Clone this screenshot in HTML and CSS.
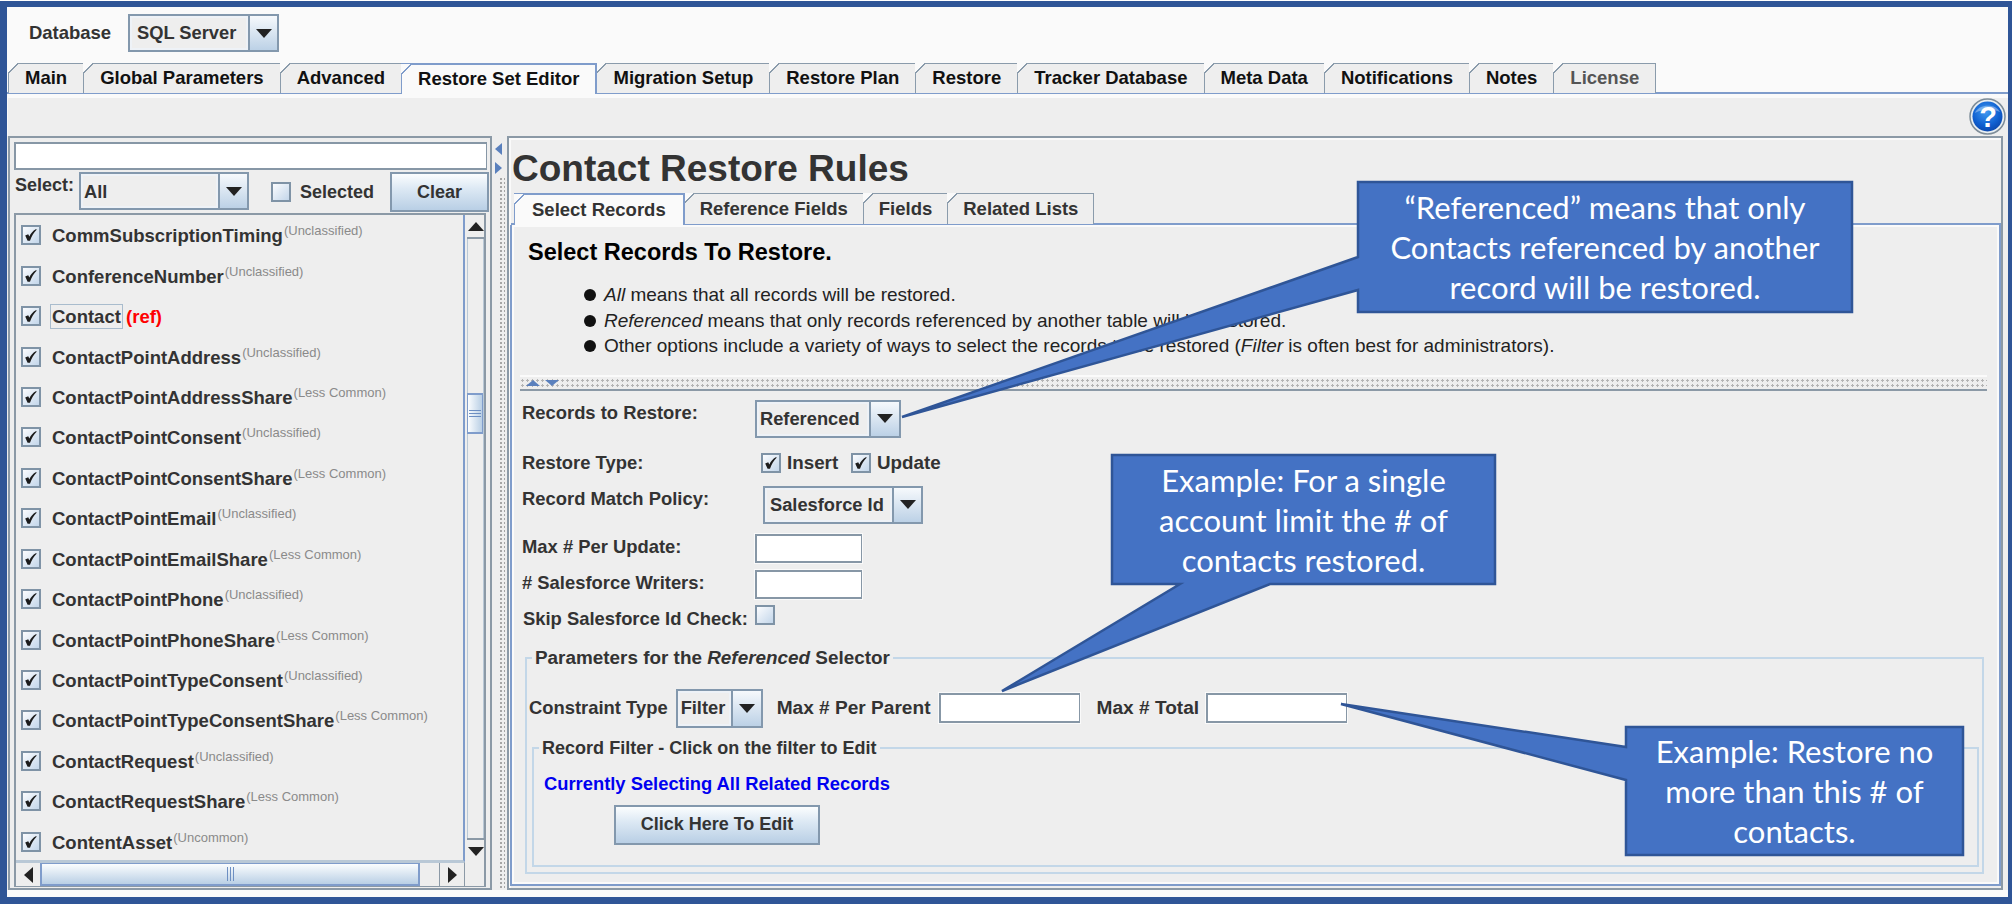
FILE: index.html
```html
<!DOCTYPE html>
<html lang="en">
<head>
<meta charset="utf-8">
<title>Contact Restore Rules</title>
<link rel="stylesheet" href="styles.css">
</head>
<body>
<svg class="defs" width="0" height="0" aria-hidden="true">
  <symbol id="tick" viewBox="0 0 16 16"><path d="M2.2 8.6 L5.2 7.2 L6.4 9.4 C7.6 6.6 9.6 4 13.2 2 L13.6 2.8 C10.8 5.6 8.6 9 7 13.8 L4.6 13.8 Z" fill="#1c1c1c"/></symbol>
</svg>
<div class="frame">
  <div class="topbar">
    <span class="db-label">Database</span>
    <div class="combo combo-db"><span class="combo-text">SQL Server</span><span class="combo-btn"><i class="tri"></i></span></div>
  </div>
  <div class="tabs">
    <div class="tab">Main</div>
    <div class="tab">Global Parameters</div>
    <div class="tab">Advanced</div>
    <div class="tab active">Restore Set Editor</div>
    <div class="tab">Migration Setup</div>
    <div class="tab">Restore Plan</div>
    <div class="tab">Restore</div>
    <div class="tab">Tracker Database</div>
    <div class="tab">Meta Data</div>
    <div class="tab">Notifications</div>
    <div class="tab">Notes</div>
    <div class="tab disabled">License</div>
  </div>
  <div class="toolbar">
    <svg class="help" viewBox="0 0 37 37" width="37" height="37">
      <defs>
        <radialGradient id="helpfill" cx="0.45" cy="0.35" r="0.75"><stop offset="0" stop-color="#3f9bf0"/><stop offset="0.6" stop-color="#0f5fd0"/><stop offset="1" stop-color="#0a3f9f"/></radialGradient>
      </defs>
      <circle cx="18.5" cy="18.5" r="17.5" fill="#e8eef2" stroke="#7d8c98" stroke-width="1.5"/>
      <circle cx="18.5" cy="18.5" r="15" fill="url(#helpfill)"/>
      <path d="M6 15 C9 6 27 5 31 14 C24 11 13 11 6 15 Z" fill="#ffffff" opacity="0.35"/>
      <text x="19" y="29" class="help-q">?</text>
    </svg>
  </div>
  <div class="split">
    <section class="left">
      <input class="search" type="text" aria-label="Search">
      <div class="select-row">
        <span class="select-label">Select:</span>
        <div class="combo combo-all"><span class="combo-text">All</span><span class="combo-btn"><i class="tri"></i></span></div>
        <label class="selected"><span class="check"></span>Selected</label>
        <button class="btn btn-clear">Clear</button>
      </div>
      <div class="listbox">
        <div class="list">
          <div class="row"><span class="check"><svg><use href="#tick"/></svg></span><span class="name">CommSubscriptionTiming<sup>(Unclassified)</sup></span></div>
          <div class="row"><span class="check"><svg><use href="#tick"/></svg></span><span class="name">ConferenceNumber<sup>(Unclassified)</sup></span></div>
          <div class="row"><span class="check"><svg><use href="#tick"/></svg></span><span class="name"><span class="focus">Contact</span> <span class="ref">(ref)</span></span></div>
          <div class="row"><span class="check"><svg><use href="#tick"/></svg></span><span class="name">ContactPointAddress<sup>(Unclassified)</sup></span></div>
          <div class="row"><span class="check"><svg><use href="#tick"/></svg></span><span class="name">ContactPointAddressShare<sup>(Less Common)</sup></span></div>
          <div class="row"><span class="check"><svg><use href="#tick"/></svg></span><span class="name">ContactPointConsent<sup>(Unclassified)</sup></span></div>
          <div class="row"><span class="check"><svg><use href="#tick"/></svg></span><span class="name">ContactPointConsentShare<sup>(Less Common)</sup></span></div>
          <div class="row"><span class="check"><svg><use href="#tick"/></svg></span><span class="name">ContactPointEmail<sup>(Unclassified)</sup></span></div>
          <div class="row"><span class="check"><svg><use href="#tick"/></svg></span><span class="name">ContactPointEmailShare<sup>(Less Common)</sup></span></div>
          <div class="row"><span class="check"><svg><use href="#tick"/></svg></span><span class="name">ContactPointPhone<sup>(Unclassified)</sup></span></div>
          <div class="row"><span class="check"><svg><use href="#tick"/></svg></span><span class="name">ContactPointPhoneShare<sup>(Less Common)</sup></span></div>
          <div class="row"><span class="check"><svg><use href="#tick"/></svg></span><span class="name">ContactPointTypeConsent<sup>(Unclassified)</sup></span></div>
          <div class="row"><span class="check"><svg><use href="#tick"/></svg></span><span class="name">ContactPointTypeConsentShare<sup>(Less Common)</sup></span></div>
          <div class="row"><span class="check"><svg><use href="#tick"/></svg></span><span class="name">ContactRequest<sup>(Unclassified)</sup></span></div>
          <div class="row"><span class="check"><svg><use href="#tick"/></svg></span><span class="name">ContactRequestShare<sup>(Less Common)</sup></span></div>
          <div class="row"><span class="check"><svg><use href="#tick"/></svg></span><span class="name">ContentAsset<sup>(Uncommon)</sup></span></div>
        </div>
        <div class="vbar">
          <span class="sb-btn sb-v"><i class="tri tri-up"></i></span>
          <div class="vtrack"><div class="vthumb"><i></i><i></i><i></i></div></div>
          <span class="sb-btn sb-v"><i class="tri"></i></span>
        </div>
        <div class="hbar">
          <span class="sb-btn sb-h"><i class="tri-left"></i></span>
          <div class="hthumb"><i></i><i></i><i></i></div>
          <div class="htrack"></div>
          <span class="sb-btn sb-h"><i class="tri-right"></i></span>
        </div>
        <div class="corner"></div>
      </div>
    </section>
    <div class="splitter">
      <i class="arrow-l"></i>
      <i class="arrow-r"></i>
      <div class="dots"></div>
    </div>
    <section class="right">
      <h1 class="title">Contact Restore Rules</h1>
      <div class="subtabs">
        <div class="tab sub active">Select Records</div>
        <div class="tab sub">Reference Fields</div>
        <div class="tab sub">Fields</div>
        <div class="tab sub">Related Lists</div>
      </div>
      <div class="panel">
        <h2 class="heading">Select Records To Restore.</h2>
        <ul class="bullets">
          <li><em>All</em> means that all records will be restored.</li>
          <li><em>Referenced</em> means that only records referenced by another table will be restored.</li>
          <li>Other options include a variety of ways to select the records to be restored (<em>Filter</em> is often best for administrators).</li>
        </ul>
        <div class="divider"><i class="mini-up"></i><i class="mini-down"></i></div>
        <div class="form">
          <div class="frow f1"><span class="flabel up12">Records to Restore:</span><div class="combo combo-ref"><span class="combo-text">Referenced</span><span class="combo-btn"><i class="tri"></i></span></div></div>
          <div class="frow f2"><span class="flabel">Restore Type:</span><div class="checks"><span class="check"><svg><use href="#tick"/></svg></span><span class="clabel">Insert</span><span class="check"><svg><use href="#tick"/></svg></span><span class="clabel">Update</span></div></div>
          <div class="frow f3"><span class="flabel up12 w241">Record Match Policy:</span><div class="combo combo-sf"><span class="combo-text">Salesforce Id</span><span class="combo-btn"><i class="tri"></i></span></div></div>
          <div class="frow f4"><span class="flabel up3">Max # Per Update:</span><input class="field field-s" type="text" aria-label="Max per update"></div>
          <div class="frow f5"><span class="flabel up3"># Salesforce Writers:</span><input class="field field-s" type="text" aria-label="Salesforce writers"></div>
          <div class="frow f6"><span class="flabel skip">Skip Salesforce Id Check:</span><span class="check"></span></div>
        </div>
        <fieldset class="group outer">
          <legend>Parameters for the <em>Referenced</em> Selector</legend>
          <div class="crow">
            <span class="clbl">Constraint Type</span>
            <div class="combo combo-filter"><span class="combo-text">Filter</span><span class="combo-btn"><i class="tri"></i></span></div>
            <span class="clbl c-parent">Max # Per Parent</span>
            <input class="field field-l" type="text" aria-label="Max per parent">
            <span class="clbl c-total">Max # Total</span>
            <input class="field field-l" type="text" aria-label="Max total">
          </div>
          <fieldset class="group inner">
            <legend>Record Filter - Click on the filter to Edit</legend>
            <div class="status">Currently Selecting All Related Records</div>
            <button class="btn btn-edit">Click Here To Edit</button>
          </fieldset>
        </fieldset>
      </div>
    </section>
  </div>
</div>
<svg class="pointers" width="2014" height="905" viewBox="0 0 2014 905" aria-hidden="true">
  <path d="M1358 182 H1852 V312 H1358 V290 L902 417 L1358 257 Z"/>
  <path d="M1112 455 H1495 V584 H1270 L1002 691 L1180 584 H1112 Z"/>
  <path d="M1626 727 H1963 V855 H1626 V780 L1341 704 L1626 747 Z"/>
</svg>
<div class="callout call-a">“Referenced” means that only<br>Contacts referenced by another<br>record will be restored.</div>
<div class="callout call-b">Example: For a single<br>account limit the # of<br>contacts restored.</div>
<div class="callout call-c">Example: Restore no<br>more than this # of<br>contacts.</div>
</body>
</html>
```
FILE: styles.css
```css
* { box-sizing: border-box; }
html, body { margin: 0; padding: 0; }
body { width: 2014px; height: 905px; overflow: hidden; background: #fff; font-family: "Liberation Sans", Arial, sans-serif; color: #333; position: relative; }
.defs { position: absolute; }
.frame { margin: 1px 2px 0 0; height: 903px; border: solid #2f5597; border-width: 6px 4px 7px 7px; background: #fafafa; display: flex; flex-direction: column; }

.topbar { height: 56px; flex: none; display: flex; align-items: flex-start; padding: 7px 0 0 22px; }
.db-label { font-size: 18.5px; font-weight: bold; line-height: 38px; width: 99px; letter-spacing: -.05px; }

.combo { display: flex; border: 2px solid #8398ad; background: #eee; font-size: 18.3px; font-weight: bold; color: #333; flex: none; }
.combo-text { flex: 1; display: flex; align-items: center; padding-left: 5px; border: 2px solid #eef2f7; white-space: nowrap; }
.combo-btn { flex: none; border-left: 2px solid #8398ad; background: linear-gradient(#f6f9fc, #bcd1e6); display: flex; align-items: center; justify-content: center; }
.tri { display: block; width: 0; height: 0; border: solid transparent; border-width: 9px 8px 0; border-top-color: #222; }
.tri-up { border-width: 0 8px 9px; border-bottom-color: #222; border-top-color: transparent; }
.tri-left { display: block; width: 0; height: 0; border: solid transparent; border-width: 8px 9px 8px 0; border-right-color: #222; }
.tri-right { display: block; width: 0; height: 0; border: solid transparent; border-width: 8px 0 8px 9px; border-left-color: #222; }
.combo-db { width: 151px; height: 38px; }
.combo-db .combo-btn { width: 29px; }
.combo-all { width: 170px; height: 38px; }
.combo-all .combo-btn { width: 29px; }
.combo-all .combo-text { padding: 2px 0 0 1px; }
.combo-ref { width: 146px; height: 38px; }
.combo-ref .combo-btn { width: 30px; }
.combo-ref .combo-text { padding-left: 1px; }
.combo-sf { width: 160px; height: 38px; }
.combo-sf .combo-btn { width: 29px; }
.combo-sf .combo-text { padding-left: 3px; }
.combo-filter { width: 87px; height: 39px; }
.combo-filter .combo-btn { width: 30px; }
.combo-filter .combo-text { padding-left: 1px; }

.tabs { height: 31px; flex: none; display: flex; padding-left: 1px; border-bottom: 2px solid #7f9ccb; }
.tab { position: relative; height: 30px; padding: 0 16px; margin-right: -1px; border: 1px solid #8a9bab; border-bottom: 0; background: #eee; font-size: 18.5px; font-weight: bold; line-height: 28px; color: #111; white-space: nowrap; }
.tab::before { content: ""; position: absolute; left: -1px; top: -1px; width: 10px; height: 10px; background: linear-gradient(135deg, #fafafa 46%, #8a9bab 46%, #8a9bab 56%, transparent 56%); }
.tab.active { background: #fafafa; border-color: #7f9ccb; height: 31px; z-index: 1; border-width: 2px 2px 0 1px; }
.tab.active::before { background: linear-gradient(135deg, #fafafa 46%, #7f9ccb 46%, #7f9ccb 58%, transparent 58%); }
.tab.disabled { color: #555; }

.toolbar { height: 42px; flex: none; margin-left: 1px; border-top: 4px solid #fafafa; background: #eee; display: flex; justify-content: flex-end; padding-right: 2px; }
.help { display: block; flex: none; }
.help-q { font: bold 29px "Liberation Sans", Arial, sans-serif; fill: #fff; text-anchor: middle; }

.split { height: 754px; flex: none; display: flex; padding: 0 5px 0 1px; background: #eee; }

.left { width: 484px; flex: none; border: 2px solid #8b99a6; padding: 4px 1px 1px 4px; display: flex; flex-direction: column; }
.search { display: block; height: 28px; width: 473px; flex: none; margin: 0 0 2px; padding: 0; background: #fff; border: solid #8797a6; border-width: 2px 1px 2px 2px; outline: 0; }
.select-row { height: 40px; flex: none; display: flex; align-items: flex-start; margin-bottom: 1px; }
.select-label { font-size: 18px; font-weight: bold; width: 65px; padding-left: 1px; line-height: 26px; }
.selected { display: flex; align-items: center; height: 38px; margin-left: 22px; width: 119px; font-size: 18px; font-weight: bold; flex: none; padding-top: 2px; }
.selected .check { margin-right: 9px; }
.check { display: flex; flex: none; width: 20px; height: 20px; border: 2px solid #7f93a6; background: linear-gradient(135deg, #fbfcfe, #c3d6ea); align-items: center; justify-content: center; }
.check svg { display: block; width: 16px; height: 16px; }

.btn { display: block; font-family: inherit; font-weight: bold; font-size: 18px; color: #333; border: 2px solid #8398ad; background: linear-gradient(#fbfdfe, #dde9f4 40%, #b9cfe5); padding: 0; }
.btn-clear { width: 99px; height: 40px; flex: none; }

.listbox { flex: 1; width: 472px; display: grid; grid-template-columns: 449px 1fr; grid-template-rows: 1fr 24px; border: 2px solid #8b99a6; border-bottom-width: 1px; min-height: 0; }
.list { display: flex; flex-direction: column; overflow: hidden; min-height: 0; border-right: 2px solid #7f9ccb; border-bottom: 2px solid #b9c8d6; padding: 0 0 0 5px; }
.row { flex: 0 0 40.45px; display: flex; align-items: center; gap: 11px; }
.name { font-size: 18.5px; font-weight: bold; color: #333; white-space: nowrap; line-height: 22px; padding-top: 2px; }
.name sup { font-size: 13px; font-weight: normal; color: #8a8a8a; vertical-align: 7px; line-height: 0; margin-left: 1px; }
.ref { color: #f00; }
.focus { outline: 1px solid #a9bccd; outline-offset: 1px; }

.vbar { display: flex; flex-direction: column; margin-left: 2px; min-height: 0; }
.sb-btn { display: flex; align-items: center; justify-content: center; flex: none; background: #eee; }
.sb-v { height: 24px; border: solid #8b99a6; border-width: 0; }
.vbar .sb-v:first-child { border-bottom-width: 2px; }
.vbar .sb-v:last-child { border-top-width: 2px; }
.vtrack { flex: 1; padding-top: 154px; border-left: 1px solid #b9c8d6; border-right: 1px solid #b9c8d6; }
.vthumb { height: 41px; margin-left: -1px; background: linear-gradient(90deg, #fbfdfe, #b9cfe5); border: 2px solid #7f9ccb; border-width: 2px 1px; display: flex; flex-direction: column; justify-content: center; align-items: center; gap: 2px; }
.vthumb i { display: block; width: 12px; height: 1px; background: #6d8fc2; }

.hbar { display: flex; border-top: 1px solid #b9c8d6; border-right: 1px solid #8b99a6; }
.sb-h { width: 24px; }
.hthumb { width: 380px; background: linear-gradient(#fbfdfe, #b9cfe5); border: solid #7f9ccb; border-width: 1px 2px 2px; display: flex; justify-content: center; align-items: center; gap: 2px; flex: none; }
.hthumb i { display: block; width: 1px; height: 14px; background: #6d8fc2; }
.htrack { flex: 1; border-right: 1px solid #8b99a6; }
.hbar .sb-h:first-child { border-right: 0; }
.corner { background: #eee; }

.splitter { width: 15px; flex: none; padding: 7px 0 0 3px; display: flex; flex-direction: column; }
.arrow-l { display: block; width: 0; height: 0; border: solid transparent; border-width: 6px 7px 6px 0; border-right-color: #5a80bd; }
.arrow-r { display: block; width: 0; height: 0; margin-top: 7px; border: solid transparent; border-width: 6px 0 6px 7px; border-left-color: #5a80bd; }
.dots { flex: 1; width: 6px; margin: 3px 0 2px 4px; background: radial-gradient(circle, #a5a5a5 1px, transparent 1.2px) 0 0 / 4px 4px; }

.right { flex: 1; min-width: 0; border: 2px solid #8b99a6; display: flex; flex-direction: column; padding: 0 0 0 2px; box-shadow: inset 2px 2px 0 #fafafa; }
.title { margin: 0; padding: 9px 0 0 1px; height: 55px; font-size: 37px; line-height: 44px; font-weight: bold; color: #333; white-space: nowrap; flex: none; }
.subtabs { display: flex; padding-left: 3px; height: 32px; flex: none; border-bottom: 2px solid #7f9ccb; }
.tab.sub { height: 31px; padding: 0 15px; line-height: 30px; background: #eee; color: #333; }
.tab.sub.active { height: 32px; padding: 0 17px; background: #fafafa; }

.panel { flex: 1; min-height: 0; margin: 0 0 2px -1px; border: solid #7f9ccb; border-width: 0 2px 2px 2px; background: #eee; box-shadow: inset 0 0 0 2px #fafafa; padding: 0; }
.heading { margin: 0; padding: 13px 0 0 16px; height: 47px; font-size: 23.5px; line-height: 28px; font-weight: bold; color: #000; }
.bullets { list-style: none; margin: 10px 0 0; padding: 0 0 0 92px; font-size: 19px; line-height: 25.5px; color: #222; }
.bullets li { position: relative; white-space: nowrap; }
.bullets li::before { content: ""; position: absolute; left: -20px; top: 7px; width: 12px; height: 12px; border-radius: 50%; background: #111; }

.divider { height: 16px; margin: 16px 12px 0 8px; border-top: 2px solid #fafafa; border-bottom: 2px solid #8b99a6; background: radial-gradient(circle, #b4b4b4 1px, transparent 1.2px) 0 1px / 5px 5px; display: flex; align-items: center; padding-left: 6px; gap: 5px; }
.mini-up { display: block; width: 0; height: 0; border: solid transparent; border-width: 0 7px 6px; border-bottom-color: #5a80bd; }
.mini-down { display: block; width: 0; height: 0; border: solid transparent; border-width: 6px 7px 0; border-top-color: #5a80bd; }

.form { padding-left: 10px; }
.frow { display: flex; align-items: center; }
.flabel { width: 233px; flex: none; font-size: 18.4px; font-weight: bold; line-height: 22px; color: #333; white-space: nowrap; }
.up12 { padding-bottom: 12px; }
.up3 { padding-bottom: 3px; }
.w241 { width: 241px; }
.skip { align-self: flex-start; margin-top: 3px; padding-left: 1px; }
.f1 { margin-top: 9px; height: 38px; }
.f2 { margin-top: 15px; height: 20px; }
.f3 { margin-top: 13px; height: 38px; }
.f4 { margin-top: 10px; height: 29px; }
.f5 { margin-top: 7px; height: 29px; }
.f6 { margin-top: 6px; height: 24px; align-items: flex-start; }
.checks { display: flex; align-items: center; padding-left: 6px; }
.clabel { font-size: 18.8px; font-weight: bold; margin-left: 6px; width: 64px; }
.clabel:last-child { width: auto; }
.field { display: block; flex: none; margin: 0; padding: 0; height: 29px; background: #fff; border: solid #8797a6; border-width: 2px 1px 2px 2px; outline: 1px solid #fafafa; }
.field-s { width: 107px; }
.field-l { width: 141px; height: 30px; }

.group { margin: 0; min-width: 0; border: 2px solid #c3d7e8; }
.group legend { padding: 0 3px; font-weight: bold; line-height: 20px; color: #333; white-space: nowrap; }
.group legend em { font-weight: bold; }
.outer { margin: 19px 15px 0 13px; padding: 21px 0 5px 2px; }
.outer > legend { margin-left: 3px; font-size: 18.9px; }
.crow { display: flex; align-items: center; height: 39px; }
.clbl { font-size: 18.4px; font-weight: bold; white-space: nowrap; flex: none; }
.crow .combo { margin-left: 8px; }
.c-parent { margin-left: 14px; margin-right: 8px; font-size: 19.1px; }
.c-total { margin-left: 17px; margin-right: 7px; font-size: 19.1px; }
.inner { margin: 10px 3px 0 3px; padding: 16px 0 20px 10px; }
.inner > legend { margin-left: -5px; font-size: 18.05px; }
.status { font-size: 18.35px; font-weight: bold; line-height: 20px; color: #0000f0; }
.btn-edit { width: 206px; height: 40px; margin: 11px 0 0 70px; }

.pointers { position: absolute; left: 0; top: 0; pointer-events: none; }
.pointers path { fill: #4472c4; stroke: #2f5597; stroke-width: 2.5; stroke-linejoin: miter; }
.callout { position: absolute; display: flex; align-items: center; justify-content: center; text-align: center; color: #fff; font-family: Lato, "Open Sans", sans-serif; font-size: 31px; line-height: 40px; }
.call-a { left: 1358px; top: 182px; width: 494px; height: 130px; }
.call-b { left: 1112px; top: 455px; width: 383px; height: 129px; }
.call-c { left: 1626px; top: 727px; width: 337px; height: 128px; }
```
